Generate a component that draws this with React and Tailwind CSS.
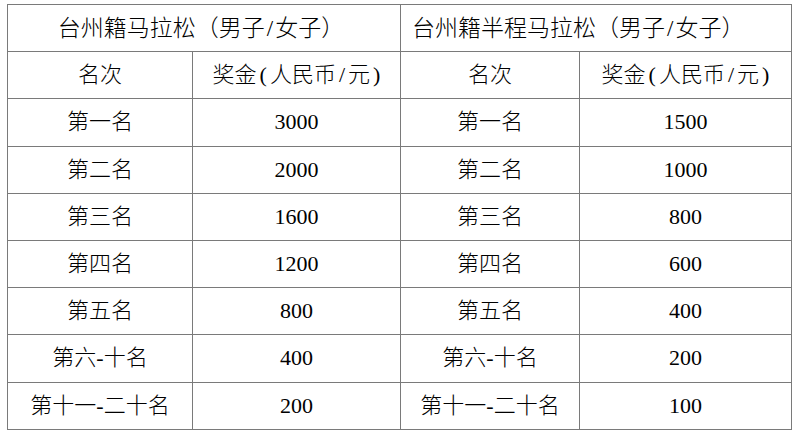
import React from 'react';

const full = [
  ['第一名', '3000', '第一名', '1500'],
  ['第二名', '2000', '第二名', '1000'],
  ['第三名', '1600', '第三名', '800'],
  ['第四名', '1200', '第四名', '600'],
  ['第五名', '800', '第五名', '400'],
  ['第六-十名', '400', '第六-十名', '200'],
  ['第十一-二十名', '200', '第十一-二十名', '100'],
];

const cell = 'flex items-center justify-center border-r border-b border-[#7a7a7a]';

function Prize() {
  return (
    <span>
      奖金<span className="mx-[3px]">(</span>人民币<span className="mx-[3px]">/</span>元<span className="ml-[3px]">)</span>
    </span>
  );
}

export default function App() {
  return (
    <div
      className="w-[800px] h-[439px] bg-white pt-[4px] pl-[7px] text-[22px] text-[#000] leading-none"
      style={{ fontFamily: '"Liberation Serif", "Noto Sans CJK SC", serif' }}
    >
      <div className="grid grid-cols-[185px_208px_179px_212px] grid-rows-[repeat(9,47.2px)] w-[785px] border-t border-l border-[#7a7a7a] font-light">
        <div className={cell + ' col-span-2 text-[23px] pr-[6px]'}>台州籍马拉松（男子<span className="mx-[2px]">/</span>女子）</div>
        <div className={cell + ' col-span-2 !justify-start pl-[11px] text-[23px]'}>台州籍半程马拉松（男子<span className="mx-[2px]">/</span>女子）</div>

        <div className={cell}>名次</div>
        <div className={cell}><Prize /></div>
        <div className={cell}>名次</div>
        <div className={cell}><Prize /></div>

        {full.map((r, i) => (
          <React.Fragment key={i}>
            {r.map((v, j) => (
              <div key={j} className={cell}>{v}</div>
            ))}
          </React.Fragment>
        ))}
      </div>
    </div>
  );
}
